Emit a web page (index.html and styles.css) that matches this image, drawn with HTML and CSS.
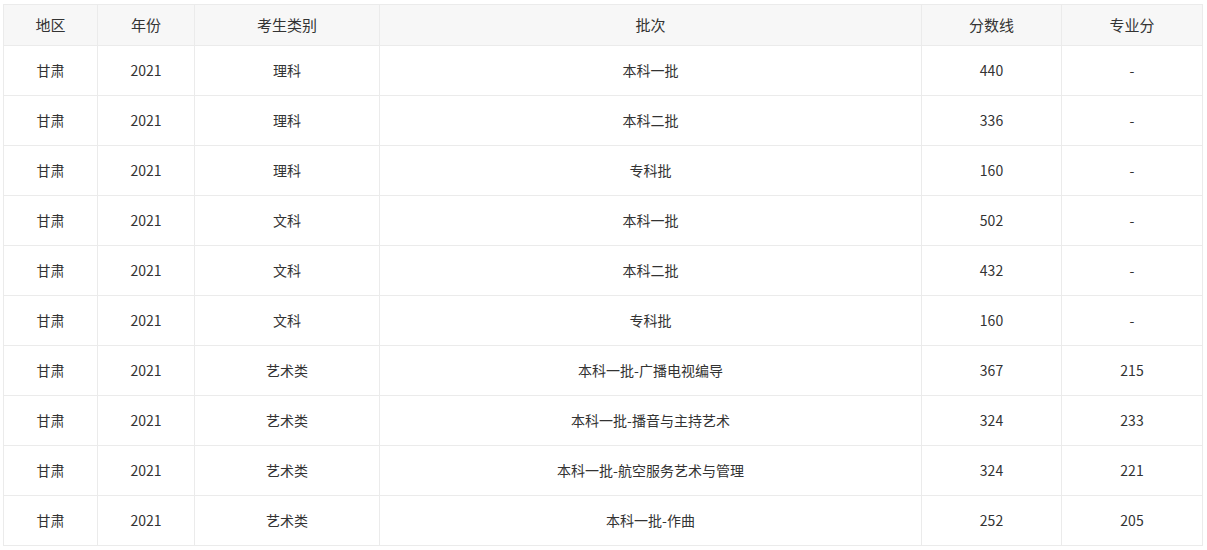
FILE: index.html
```html
<!DOCTYPE html>
<html lang="zh">
<head>
<meta charset="utf-8">
<link rel="stylesheet" href="styles.css">
</head>
<body>
<div class="wrap">
<table class="score">
<colgroup>
<col class="c1"><col class="c2"><col class="c3"><col class="c4"><col class="c5"><col class="c6">
</colgroup>
<thead>
<tr><th>地区</th><th>年份</th><th>考生类别</th><th>批次</th><th>分数线</th><th>专业分</th></tr>
</thead>
<tbody>
<tr><td>甘肃</td><td>2021</td><td>理科</td><td>本科一批</td><td>440</td><td>-</td></tr>
<tr><td>甘肃</td><td>2021</td><td>理科</td><td>本科二批</td><td>336</td><td>-</td></tr>
<tr><td>甘肃</td><td>2021</td><td>理科</td><td>专科批</td><td>160</td><td>-</td></tr>
<tr><td>甘肃</td><td>2021</td><td>文科</td><td>本科一批</td><td>502</td><td>-</td></tr>
<tr><td>甘肃</td><td>2021</td><td>文科</td><td>本科二批</td><td>432</td><td>-</td></tr>
<tr><td>甘肃</td><td>2021</td><td>文科</td><td>专科批</td><td>160</td><td>-</td></tr>
<tr><td>甘肃</td><td>2021</td><td>艺术类</td><td>本科一批-广播电视编导</td><td>367</td><td>215</td></tr>
<tr><td>甘肃</td><td>2021</td><td>艺术类</td><td>本科一批-播音与主持艺术</td><td>324</td><td>233</td></tr>
<tr><td>甘肃</td><td>2021</td><td>艺术类</td><td>本科一批-航空服务艺术与管理</td><td>324</td><td>221</td></tr>
<tr><td>甘肃</td><td>2021</td><td>艺术类</td><td>本科一批-作曲</td><td>252</td><td>205</td></tr>
</tbody>
</table>
</div>
</body>
</html>
```
FILE: styles.css
```css
html, body {
  margin: 0;
  padding: 0;
  background: #fff;
}
.wrap {
  padding: 4px 0 0 3px;
}
.score {
  border-collapse: collapse;
  table-layout: fixed;
  width: 1199px;
  font-family: "Microsoft YaHei", "Noto Sans CJK SC", "Noto Sans", sans-serif;
  color: #333;
}
.c1 { width: 94px; }
.c2 { width: 97px; }
.c3 { width: 185px; }
.c4 { width: 542px; }
.c5 { width: 140px; }
.c6 { width: 141px; }
.score th, .score td {
  border: 1px solid #ebebeb;
  text-align: center;
  padding: 0 0 2px 0;
}
.score th {
  background: #f7f7f7;
  font-weight: normal;
  font-size: 15px;
  height: 38px;
}
.score td {
  font-size: 14px;
  height: 47px;
}
```
